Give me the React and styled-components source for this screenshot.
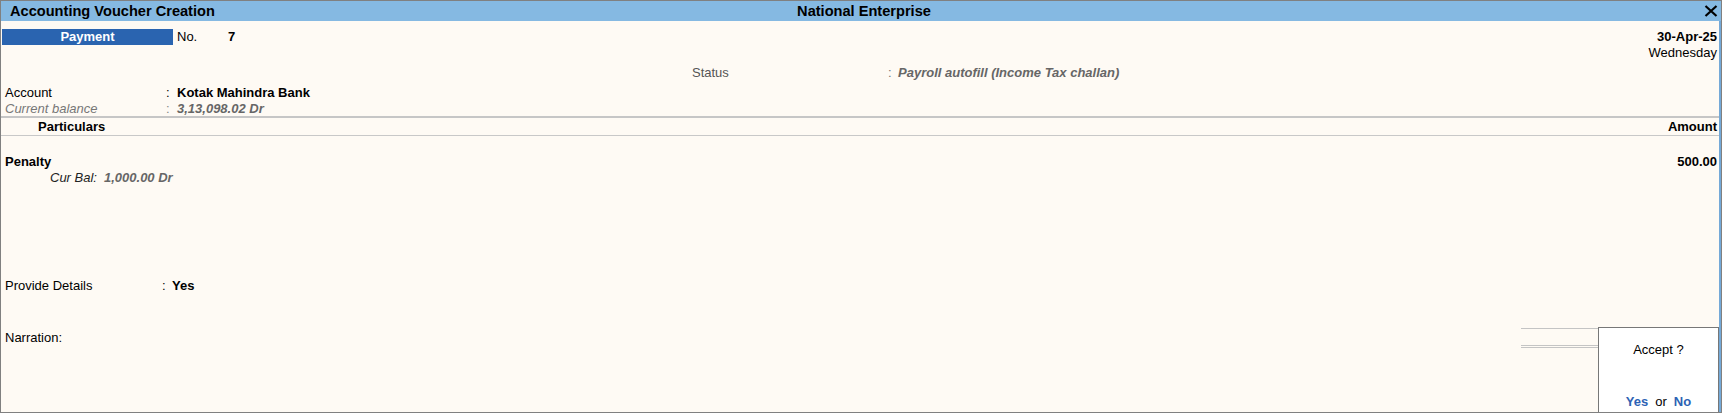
import React from "react";
import styled, { createGlobalStyle } from "styled-components";

const GlobalStyle = createGlobalStyle`
  * { box-sizing: border-box; }
  html, body { margin: 0; padding: 0; background: #fefaf4; }
  body { font-family: "Liberation Sans", Arial, sans-serif; font-size: 13px; color: #000; }
`;

const Window = styled.div`
  width: 1722px;
  height: 413px;
  display: flex;
  flex-direction: column;
  border: 1px solid #808080;
  background: #fefaf4;
`;

const TitleBar = styled.div`
  height: 20px;
  flex: none;
  display: grid;
  grid-template-columns: 1fr auto 1fr;
  align-items: center;
  background: #85b9e2;
  font-size: 14.6px;
  font-weight: bold;
  line-height: 20px;
  padding: 0 3px 0 9px;
`;

const TitleRight = styled.div`
  display: flex;
  justify-content: flex-end;
  align-items: center;
`;

const CloseIcon = () => (
  <svg width="14" height="12" viewBox="0 0 14 12">
    <path d="M1.5 1 L12.5 11 M12.5 1 L1.5 11" stroke="#000" strokeWidth="2.2" fill="none" />
  </svg>
);

const Body = styled.div`
  flex: 1;
  position: relative;
  display: flex;
  flex-direction: column;
  border-right: 2px solid #74a9d8;
  padding: 0 2px 0 4px;
`;

const Row = styled.div`
  display: flex;
  align-items: center;
  height: ${(p) => p.$h || 16}px;
  line-height: ${(p) => p.$h || 16}px;
  margin-top: ${(p) => p.$mt || 0}px;
  padding-left: ${(p) => p.$pl || 0}px;
  white-space: nowrap;
`;

const VoucherType = styled.div`
  width: 171px;
  height: 16px;
  margin-left: -3px;
  background: #2a64b0;
  color: #fff;
  font-weight: bold;
  text-align: center;
  line-height: 16px;
`;

const NoLabel = styled.span`
  width: 51px;
  margin-left: 4px;
`;

const Bold = styled.span`
  font-weight: bold;
`;

const Right = styled.span`
  margin-left: auto;
  font-weight: ${(p) => (p.$bold ? "bold" : "normal")};
`;

const Label = styled.span`
  width: ${(p) => p.$w}px;
  color: ${(p) => p.$color || "#000"};
  font-style: ${(p) => (p.$italic ? "italic" : "normal")};
`;

const Colon = styled.span`
  width: ${(p) => p.$w || 11}px;
  color: ${(p) => p.$color || "#000"};
`;

const Value = styled.span`
  font-weight: bold;
  color: ${(p) => p.$color || "#000"};
  font-style: ${(p) => (p.$italic ? "italic" : "normal")};
`;

const ThickRule = styled.div`
  height: 2px;
  margin: 0 -2px 0 -4px;
  background: #c6c6c6;
`;

const ThinRule = styled.div`
  height: 1px;
  margin: 0 -2px 0 -4px;
  background: #c8c8c8;
`;

const ColHead = styled.span`
  font-weight: bold;
  margin-left: ${(p) => p.$ml || 0}px;
`;

const Entries = styled.div`
  flex: 1;
  display: flex;
  flex-direction: column;
  padding-top: 18px;
`;

const CurBal = styled.span`
  font-style: italic;
  color: #222;
  width: 54px;
  margin-left: 45px;
`;

const Footer = styled.div`
  height: 84px;
  display: flex;
  align-items: flex-start;
  margin-top: 34px;
`;

const Narration = styled.span`
  margin-top: 2px;
  line-height: 16px;
`;

const TotalBox = styled.div`
  margin-left: auto;
  margin-right: -2px;
  width: 198px;
  height: 20px;
  border-top: 1px solid #c4c4c4;
  border-bottom: 3px double #c4c4c4;
`;

const Popup = styled.div`
  position: absolute;
  top: 306px;
  right: 0;
  bottom: 0;
  width: 121px;
  background: #fff;
  border: 1px solid #777;
  border-bottom: none;
  display: flex;
  flex-direction: column;
  justify-content: space-between;
  align-items: center;
  padding: 14px 0 2px;
  line-height: 16px;
`;

const Choice = styled.span`
  color: #2d62b4;
  font-weight: bold;
`;

const Or = styled.span`
  margin: 0 7px;
`;

export default function App() {
  return (
    <>
      <GlobalStyle />
      <Window>
        <TitleBar>
          <span>Accounting Voucher Creation</span>
          <span>National Enterprise</span>
          <TitleRight>
            <CloseIcon />
          </TitleRight>
        </TitleBar>
        <Body>
          <Row $mt={8}>
            <VoucherType>Payment</VoucherType>
            <NoLabel>No.</NoLabel>
            <Bold>7</Bold>
            <Right $bold>30-Apr-25</Right>
          </Row>
          <Row>
            <Right>Wednesday</Right>
          </Row>
          <Row $mt={4} $pl={687}>
            <Label $w={196} $color="#555">Status</Label>
            <Colon $w={10} $color="#777">:</Colon>
            <Value $italic $color="#666">Payroll autofill (Income Tax challan)</Value>
          </Row>
          <Row $mt={4}>
            <Label $w={161}>Account</Label>
            <Colon>:</Colon>
            <Value>Kotak Mahindra Bank</Value>
          </Row>
          <Row $h={15}>
            <Label $w={161} $italic $color="#777">Current balance</Label>
            <Colon $color="#888">:</Colon>
            <Value $italic $color="#666">3,13,098.02 Dr</Value>
          </Row>
          <ThickRule />
          <Row $h={17}>
            <ColHead $ml={33}>Particulars</ColHead>
            <Right $bold>Amount</Right>
          </Row>
          <ThinRule />
          <Entries>
            <Row>
              <Bold>Penalty</Bold>
              <Right $bold>500.00</Right>
            </Row>
            <Row>
              <CurBal>Cur Bal:</CurBal>
              <Value $italic $color="#666">1,000.00 Dr</Value>
            </Row>
          </Entries>
          <Row>
            <Label $w={157}>Provide Details</Label>
            <Colon $w={10}>:</Colon>
            <Value>Yes</Value>
          </Row>
          <Footer>
            <Narration>Narration:</Narration>
            <TotalBox />
          </Footer>
          <Popup>
            <span>Accept ?</span>
            <div>
              <Choice>Yes</Choice>
              <Or>or</Or>
              <Choice>No</Choice>
            </div>
          </Popup>
        </Body>
      </Window>
    </>
  );
}
